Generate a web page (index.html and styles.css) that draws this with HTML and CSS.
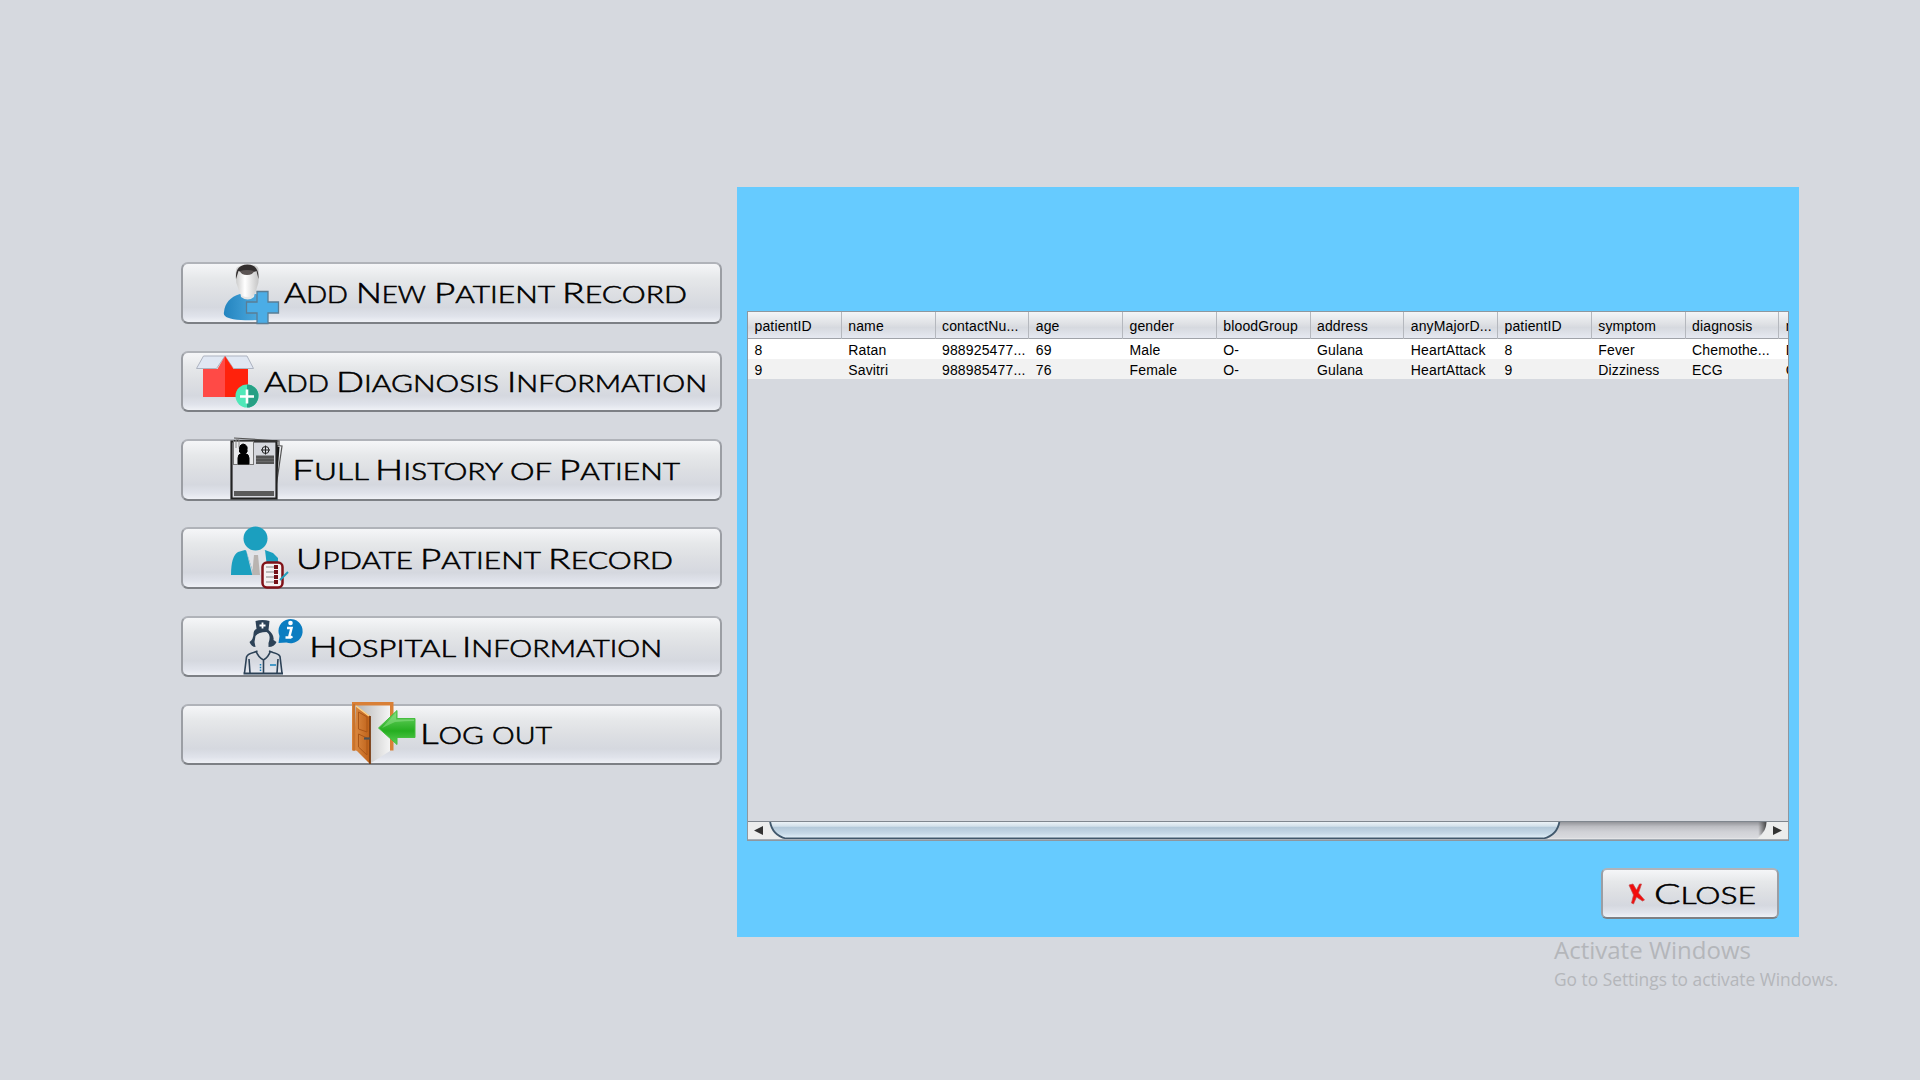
FILE: index.html
```html
<!DOCTYPE html>
<html lang="en">
<head>
<meta charset="utf-8">
<title>Hospital Management</title>
<link rel="stylesheet" href="styles.css">
</head>
<body>
<main class="screen">
  <nav class="menu">
    <button class="btn">
      <svg class="icon" width="68" height="62" viewBox="216 262 68 62">
        <defs>
          <linearGradient id="blue" x1="0" x2="1"><stop offset="0" stop-color="#2384bf"/><stop offset="1" stop-color="#55b0e4"/></linearGradient>
          <linearGradient id="face" x1="0" x2="1"><stop offset="0" stop-color="#c9c9c9"/><stop offset=".4" stop-color="#fff"/><stop offset="1" stop-color="#c4c4c4"/></linearGradient>
        </defs>
        <path d="M224 312c1-9 6-15 16-18h16l9 5v20q-12 2-24 1-19-1-17-8z" fill="url(#blue)"/>
        <path d="M240 291l1 6q7 5 13 0l1-6z" fill="#e6e6e6"/>
        <path d="M236 270q0-5 11.500-5.500T258.500 270q1.500 11-2 19-1 5-4 7-5 2-10 0-3-2-4-7-4-8-2.500-19z" fill="url(#face)"/>
        <path d="M236 279q-1-14 11-14.500T258.500 279l-2-8q-9 4-18 0z" fill="#332f2f"/>
        <path d="M240 271q7-2 14 0-1 4-7 4t-7-4z" fill="#5b5453"/>
        <path d="M257 291.500h11v10.500h10.500v11H268v10.500h-11V313h-10.500v-11H257z" fill="#4badE6" stroke="#5a7d95" stroke-width="1.300"/>
      </svg>
      <svg class="label" width="402" height="62">
        <text x="0" y="41" textLength="64" lengthAdjust="spacingAndGlyphs">A<tspan>dd</tspan></text>
        <text x="72" y="41" textLength="70" lengthAdjust="spacingAndGlyphs">N<tspan>ew</tspan></text>
        <text x="150" y="41" textLength="121" lengthAdjust="spacingAndGlyphs">P<tspan>atient</tspan></text>
        <text x="278" y="41" textLength="125" lengthAdjust="spacingAndGlyphs">R<tspan>ecord</tspan></text>
      </svg>
    </button>
    <button class="btn">
      <svg class="icon" width="68" height="61" viewBox="197 351 68 61">
        <rect x="203" y="369" width="22.500" height="28" fill="#ff4a46"/><rect x="225" y="369" width="23" height="28" fill="#ff220c"/>
        <path d="M203.500 356H225l-8.500 12.500H196.500zM225 356h22l6.500 12.500h-20z" fill="#e0e7f3" stroke="#adb3c0"/>
        <path d="M217.500 369l7.500-13v13z" fill="#ff4a46"/><path d="M225 356l8.500 13H225z" fill="#ff220c"/>
        <circle cx="247" cy="396" r="11.500" fill="#50e8b8"/><path d="M247 384.500a11.500 11.500 0 0 1 0 23z" fill="#27a085"/>
        <path d="M240 396.500h14M247 389.500v14" stroke="#fff" stroke-width="2.600"/>
      </svg>
      <svg class="label" width="440" height="61">
        <text x="-1" y="40.500" textLength="65" lengthAdjust="spacingAndGlyphs">A<tspan>dd</tspan></text>
        <text x="71" y="40.500" textLength="163" lengthAdjust="spacingAndGlyphs">D<tspan>iagnosis</tspan></text>
        <text x="242" y="40.500" textLength="200" lengthAdjust="spacingAndGlyphs">I<tspan>nformation</tspan></text>
      </svg>
    </button>
    <button class="btn">
      <svg class="icon" width="72" height="62" viewBox="223 439 72 62">
        <path d="M234 438l45 3v4M277 445.500l5 .5-3 21-3 20" fill="none" stroke="#555" stroke-width="1.200"/>
        <path d="M276 446l3.500 1-3 38z" fill="#111"/>
        <path d="M231.500 441.500h45v57h-45z" fill="#d6d8de" stroke="#222" stroke-width="2.200"/>
        <path d="M234 441h43" stroke="#333" stroke-width="2"/>
        <rect x="233.500" y="441.500" width="20" height="23" fill="#e8e9eb" stroke="#777"/>
        <path d="M238 464v-6q0-4 3.500-4.500-3-1-2-4-1-4 3.500-5.500 5 1 4 5.500 1 3-2 4 4 .5 4 4.500v6z" stroke="#000"/>
        <path d="M236 448v-8q3-2 3 1v6" fill="none" stroke="#888"/>
        <circle cx="265.500" cy="450" r="3.500" fill="none" stroke="#222"/><path d="M261 450h9M265.500 445.500v9" stroke="#222"/>
        <rect x="256" y="455.500" width="18" height="8.500" fill="#545454"/><path d="M256 458.500h18M256 461.500h18" stroke="#777" stroke-width=".6"/>
        <path d="M234 493.500h40" stroke="#5a5a5a" stroke-width="5"/>
      </svg>
      <svg class="label" width="384" height="62">
        <text x="-3" y="40.500" textLength="77" lengthAdjust="spacingAndGlyphs">F<tspan>ull</tspan></text>
        <text x="80" y="40.500" textLength="128" lengthAdjust="spacingAndGlyphs">H<tspan>istory</tspan></text>
        <text x="215" y="40.500" textLength="42" lengthAdjust="spacingAndGlyphs"><tspan>of</tspan></text>
        <text x="264" y="40.500" textLength="121" lengthAdjust="spacingAndGlyphs">P<tspan>atient</tspan></text>
      </svg>
    </button>
    <button class="btn">
      <svg class="icon" width="69" height="62" viewBox="229 527 69 62">
        <circle cx="255.500" cy="538.500" r="12" fill="#1b9fbf"/>
        <path d="M231 575q0-19 7-23l7-2 10 5h3l7-5 8 3 5 5v17z" fill="#1b9fbf"/>
        <path d="M246 550l9 4 10-4 3 25H254z" fill="#e2e4e9"/><path d="M246 550l8 25-2-1z" fill="#d0d5dd"/>
        <path d="M254 555h4l2 20h-8z" fill="#b9b4b1"/>
        <rect x="262.500" y="562.500" width="20" height="25" rx="4.500" fill="#f5f2f2" stroke="#801218" stroke-width="2.500"/>
        <path d="M266 567h8M266 572h8M266 577h8M266 582h8" stroke="#aaa" stroke-width="1.300"/>
        <path d="M276 565v20" stroke="#741015" stroke-width="4" stroke-dasharray="4 1"/>
        <path d="M280 580l8-8" stroke="#239dbb" stroke-width="2"/>
      </svg>
      <svg class="label" width="375" height="62">
        <text x="-2" y="41.500" textLength="117" lengthAdjust="spacingAndGlyphs">U<tspan>pdate</tspan></text>
        <text x="122" y="41.500" textLength="121" lengthAdjust="spacingAndGlyphs">P<tspan>atient</tspan></text>
        <text x="250" y="41.500" textLength="125" lengthAdjust="spacingAndGlyphs">R<tspan>ecord</tspan></text>
      </svg>
    </button>
    <button class="btn">
      <svg class="icon" width="69" height="61" viewBox="242 616 69 61">
        <path d="M255.500 621q7-2 14 0l-1 9q6 5 5 10l3 2q-2 5-8 5v-4q3-8-2-11-8 0-11 4l-1 6 1 5q-4 0-6-5 4-3 4-8 0-4 3-5z" fill="#2d4257"/>
        <path d="M262.500 622.500v6M259.500 625.500h6" stroke="#fff" stroke-width="1.800"/>
        <path d="M244.500 673l2-16q1-3 7-4.500l4-1.500M269 651l4 1.500q6 1.500 7 4l2 16.500M256 651q2 6 7.500 9 5-3 7-9M263.500 660v13M249 659l1 14M278 659l-1 14" fill="none" stroke="#2d4257" stroke-width="1.600"/>
        <path d="M243.500 673.500h39.500" stroke="#2d4257" stroke-width="1.800"/>
        <path d="M260.500 664v7" stroke="#1b7fb9" stroke-width="1.500" stroke-dasharray="1.500 1.300"/><path d="M270 665h6" stroke="#1682bd" stroke-width="1.500"/>
        <path d="M278.500 643l1-7a12.100 12.100 0 1 1 7 6.500z" fill="#0b7dc1"/>
        <circle cx="290.500" cy="623" r="2.300" fill="#fff"/><path d="M287 628h4.500l-2 8q0 2 3 .5M285.500 637.500h6" fill="none" stroke="#fff" stroke-width="2.500"/>
      </svg>
      <svg class="label" width="349" height="61">
        <text x="-2" y="40.500" textLength="147" lengthAdjust="spacingAndGlyphs">H<tspan>ospital</tspan></text>
        <text x="151" y="40.500" textLength="200" lengthAdjust="spacingAndGlyphs">I<tspan>nformation</tspan></text>
      </svg>
    </button>
    <button class="btn">
      <svg class="icon" width="71" height="61" viewBox="351 704 71 61">
        <defs>
          <linearGradient id="wood" x1="0" x2="1"><stop offset="0" stop-color="#d8863e"/><stop offset="1" stop-color="#bf6118"/></linearGradient>
          <linearGradient id="green" x1="0" y1="0" x2="0" y2="1"><stop offset="0" stop-color="#73d66b"/><stop offset=".6" stop-color="#25ae20"/><stop offset="1" stop-color="#5dcf55"/></linearGradient>
          <linearGradient id="inside" x1="0" x2="1"><stop offset="0" stop-color="#b4b4b4"/><stop offset="1" stop-color="#f4f4f4"/></linearGradient>
        </defs>
        <path d="M352 702h41.500v48.500H352z" fill="#d98036"/>
        <path d="M355 705.500h35V751l-19 12-14-14z" fill="url(#inside)"/>
        <path d="M354 704v47" stroke="#b66825" stroke-width="1"/>
        <path d="M356 706l14 10v48l-14-14z" fill="url(#wood)"/>
        <path d="M358.500 712l8.500 5v15l-8.500-3zM358.500 734l8.500 4v17l-8.500-8z" fill="none" stroke="#ab5617"/>
        <path d="M370 716v48" stroke="#7a3d12" stroke-width="1.800"/>
        <path d="M356 706l13 10" stroke="#ffd489" stroke-width="1.500"/>
        <path d="M364 738.500h6" stroke="#4c5156" stroke-width="2.200"/>
        <path d="M378.500 728l18.500-17.500v8h18v19h-18v7z" fill="url(#green)" stroke="#46bd3f"/>
        <path d="M382 728l13-6q10-1 19-1v-1.500h-18v-7z" fill="#93e18c" opacity=".5"/>
      </svg>
      <svg class="label" width="129" height="61">
        <text x="-2" y="40" textLength="64" lengthAdjust="spacingAndGlyphs">L<tspan>og</tspan></text>
        <text x="70" y="40" textLength="60" lengthAdjust="spacingAndGlyphs"><tspan>out</tspan></text>
      </svg>
    </button>
  </nav>

  <section class="panel">
    <div class="scrollpane">
      <div class="grid head"><span>patientID</span><span>name</span><span>contactNu...</span><span>age</span><span>gender</span><span>bloodGroup</span><span>address</span><span>anyMajorD...</span><span>patientID</span><span>symptom</span><span>diagnosis</span><span>medicine</span></div>
      <div class="grid row"><span>8</span><span>Ratan</span><span>988925477...</span><span>69</span><span>Male</span><span>O-</span><span>Gulana</span><span>HeartAttack</span><span>8</span><span>Fever</span><span>Chemothe...</span><span>D</span></div>
      <div class="grid row alt"><span>9</span><span>Savitri</span><span>988985477...</span><span>76</span><span>Female</span><span>O-</span><span>Gulana</span><span>HeartAttack</span><span>9</span><span>Dizziness</span><span>ECG</span><span>G</span></div>
      <svg class="scrollbar" width="1040" height="19" viewBox="0 0 1040 19">
        <defs>
          <linearGradient id="track" x1="0" y1="0" x2="0" y2="1"><stop offset="0" stop-color="#8f9095"/><stop offset=".3" stop-color="#bdbec3"/><stop offset=".6" stop-color="#d0d1d6"/><stop offset="1" stop-color="#dadbdf"/></linearGradient>
          <linearGradient id="thumb" x1="0" y1="0" x2="0" y2="1"><stop offset="0" stop-color="#eef4f8"/><stop offset=".28" stop-color="#d2e0ea"/><stop offset=".34" stop-color="#b3c8d9"/><stop offset=".7" stop-color="#c6d9e7"/><stop offset="1" stop-color="#e6f3fb"/></linearGradient>
          <linearGradient id="shade" x1="0" x2="1"><stop offset="0" stop-color="#555" stop-opacity="0"/><stop offset="1" stop-color="#444"/></linearGradient>
        </defs>
        <rect width="1040" height="19" fill="#eceded"/>
        <path d="M22 .5h996.500q0 11-9 17H36Q24 12 22 .5z" fill="url(#track)"/>
        <path d="M1010 0h8.500q0 11-8 15z" fill="url(#shade)"/>
        <path d="M22 .5h789.500q-2 14-16 17H38Q24 14 22 .5z" fill="url(#thumb)"/>
        <path d="M22 0q2 14 16 17.500h757.500Q809.500 14 811.500 0" fill="none" stroke="#41586c" stroke-width="1.800"/>
        <path d="M0 .5h1040" stroke="#7f868e"/>
        <path d="M0 18.500h1040" stroke="#a5adb5"/>
        <path d="M6 9.500l9-4.500v9zM1034 9.500l-9-4.500v9z" fill="#333"/>
      </svg>
    </div>
    <button class="btn close">
      <svg class="icon" width="29" height="50" viewBox="1625 868 29 50">
        <path d="M1629 884l4-1 3.500 6 3-6h2l-3 9 6 7-2 1-6-4-3 7-2-1 2-8z" fill="#f20d0d" stroke="#c34a4a" stroke-width=".7"/>
      </svg>
      <svg class="label" width="100" height="50">
        <text x="0" y="34.500" textLength="102" lengthAdjust="spacingAndGlyphs">C<tspan>lose</tspan></text>
      </svg>
    </button>
  </section>
  <svg class="watermark" width="300" height="60">
    <text class="big" x="0" y="23" textLength="197" lengthAdjust="spacingAndGlyphs">Activate Windows</text>
    <text class="small" x="0" y="50" textLength="284" lengthAdjust="spacingAndGlyphs">Go to Settings to activate Windows.</text>
  </svg>
</main>
</body>
</html>
```
FILE: styles.css
```css
* { box-sizing: border-box; }
body { margin: 0; background: #d6d9df; font-family: "Liberation Sans", Arial, sans-serif; }
.screen {
  width: 1920px; height: 1080px; overflow: hidden; position: relative;
  display: flex; align-items: flex-start; gap: 15px; padding: 187px 0 0 181px;
}
.menu {
  width: 541px; height: 503px; margin-top: 75px;
  display: grid; grid-template-rows: 62px 61px 62px 62px 61px 61px; align-content: space-between;
}
.btn {
  display: flex; justify-content: center; align-items: center;
  padding: 0 2px 0 0; margin: 0; border: 2px solid; border-color: #b0b3b9 #9b9ea4 #7d8085 #9b9ea4;
  border-radius: 7px;
  background: linear-gradient(#f5f6f8 0%, #e6e8ea 25%, #dddfe3 50%, #d5d8df 75%, #e0e3eb 90%, #eff1f6 100%);
}
.icon, .label { display: block; flex: none; overflow: visible; }
.label text { font-family: Lato, "Liberation Sans", sans-serif; font-weight: 300; font-size: 28px; text-transform: uppercase; fill: #000; stroke: #000; stroke-width: .55px; }
.label tspan { font-size: 22.7px; }
.panel {
  width: 1062px; height: 750px; padding: 124px 10px 0 10px; background: #66cbff;
  display: flex; flex-direction: column; gap: 27px;
}
.scrollpane {
  width: 1042px; height: 530px; border: 1px solid #8e979f; background: #d6d9df;
  display: flex; flex-direction: column; overflow: hidden;
}
.grid { display: grid; grid-template-columns: repeat(12, 93.75px); flex: none; font-size: 14px; letter-spacing: .15px; color: #000; }
.grid span { padding-left: 6.5px; white-space: nowrap; }
.head {
  height: 27px; line-height: 28px; border-bottom: 1px solid #a0a3a9;
  background: linear-gradient(#f4f5f7, #dfe1e5 45%, #d6d9df 60%, #e6e9f1);
}
.head span { border-right: 1px solid #b5b8be; }
.row { height: 20px; line-height: 23px; background: #fff; }
.alt { background: #f2f2f2; }
.scrollbar { display: block; flex: none; margin-top: auto; }
.close { width: 178px; height: 51px; margin-left: 853.5px; padding: 0; border-radius: 6px; }
.watermark { position: absolute; left: 1554px; top: 936px; overflow: visible; }
.watermark text { font-family: "Open Sans", "Noto Sans", sans-serif; fill: #b4b6ba; }
.watermark .big { font-size: 24px; }
.watermark .small { font-size: 17.5px; }
```
